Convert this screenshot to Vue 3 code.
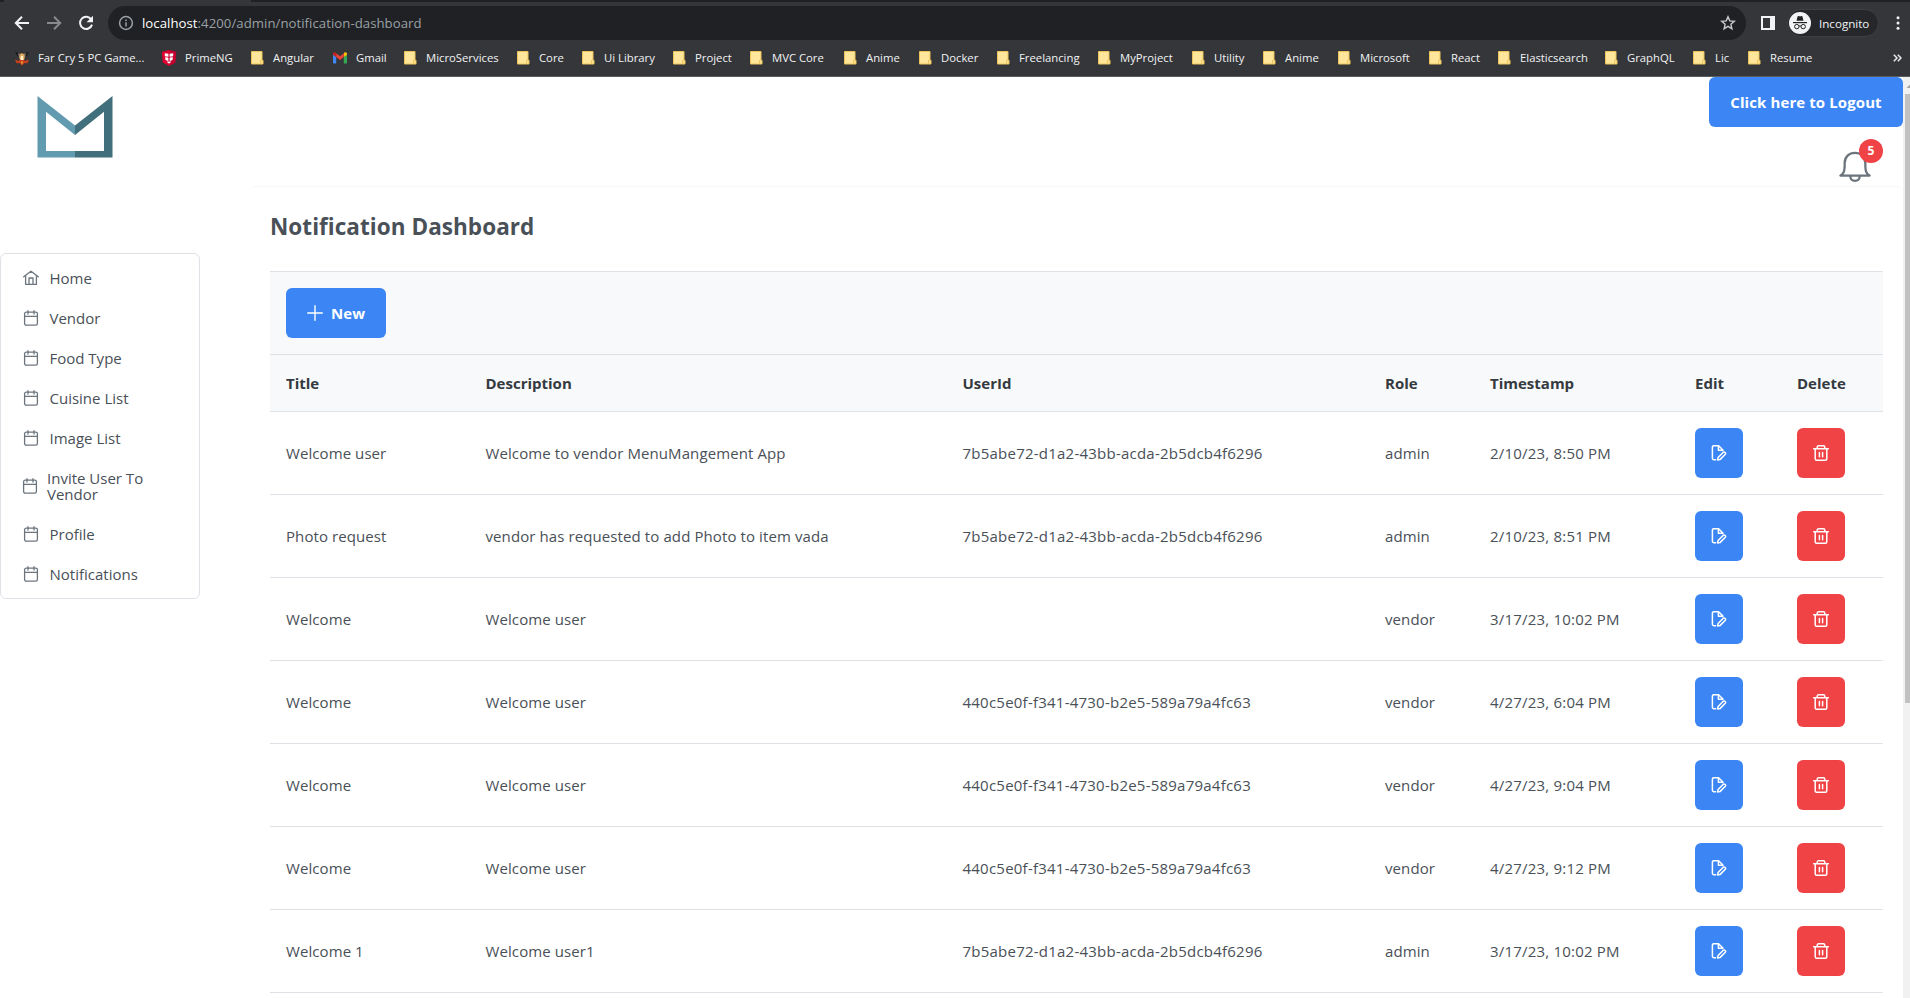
<script setup>
const bookmarks = [
  { label: 'Far Cry 5 PC Game...', icon: 'game', width: 147 },
  { label: 'PrimeNG', icon: 'prime', width: 90 },
  { label: 'Angular', width: 81 },
  { label: 'Gmail', icon: 'gmail', width: 72 },
  { label: 'MicroServices', width: 113 },
  { label: 'Core', width: 65 },
  { label: 'Ui Library', width: 91 },
  { label: 'Project', width: 77 },
  { label: 'MVC Core', width: 94 },
  { label: 'Anime', width: 75 },
  { label: 'Docker', width: 78 },
  { label: 'Freelancing', width: 101 },
  { label: 'MyProject', width: 94 },
  { label: 'Utility', width: 71 },
  { label: 'Anime', width: 75 },
  { label: 'Microsoft', width: 91 },
  { label: 'React', width: 69 },
  { label: 'Elasticsearch', width: 107 },
  { label: 'GraphQL', width: 88 },
  { label: 'Lic', width: 55 },
  { label: 'Resume', width: 80 },
]

const menu = [
  { label: 'Home', icon: 'home' },
  { label: 'Vendor' },
  { label: 'Food Type' },
  { label: 'Cuisine List' },
  { label: 'Image List' },
  { label: 'Invite User To Vendor', wrap: true },
  { label: 'Profile' },
  { label: 'Notifications' },
]

const columns = ['Title', 'Description', 'UserId', 'Role', 'Timestamp', 'Edit', 'Delete']

const idA = '7b5abe72-d1a2-43bb-acda-2b5dcb4f6296'
const idB = '440c5e0f-f341-4730-b2e5-589a79a4fc63'
const rows = [
  ['Welcome user', 'Welcome to vendor MenuMangement App', idA, 'admin', '2/10/23, 8:50 PM'],
  ['Photo request', 'vendor has requested to add Photo to item vada', idA, 'admin', '2/10/23, 8:51 PM'],
  ['Welcome', 'Welcome user', '', 'vendor', '3/17/23, 10:02 PM'],
  ['Welcome', 'Welcome user', idB, 'vendor', '4/27/23, 6:04 PM'],
  ['Welcome', 'Welcome user', idB, 'vendor', '4/27/23, 9:04 PM'],
  ['Welcome', 'Welcome user', idB, 'vendor', '4/27/23, 9:12 PM'],
  ['Welcome 1', 'Welcome user1', idA, 'admin', '3/17/23, 10:02 PM'],
]
</script>

<template>
  <div class="window">
    <header class="chrome">
      <div class="tabstrip"><span class="tab-left"></span><span class="tab-active"></span><span class="tab-rest"></span></div>
      <div class="toolbar">
        <div class="nav">
          <svg width="16" height="16" viewBox="0 0 16 16" fill="none" stroke="#f1f3f4" stroke-width="2"><path d="M15 8H2.5M8 1.8 1.800 8 8 14.200" /></svg>
          <svg width="16" height="16" viewBox="0 0 16 16" fill="none" stroke="#87898c" stroke-width="2"><path d="M1 8h12.500M8 1.800 14.200 8 8 14.200" /></svg>
          <svg width="16" height="16" viewBox="0 0 16 16" fill="none" stroke="#f1f3f4" stroke-width="2"><path d="M13.300 4.600A6.100 6.100 0 1 0 14 9.600" /><path d="M15 .8v6.400H8.600z" fill="#f1f3f4" stroke="none" /></svg>
        </div>
        <div class="omnibox">
          <svg width="16" height="16" viewBox="0 0 16 16" fill="none" stroke="#9aa0a6" stroke-width="1.500"><circle cx="8" cy="8" r="6.400" /><path d="M8 7.200v4.200M8 4.400v1.600" /></svg>
          <span class="url"><b>localhost</b><i>:4200/admin/notification-dashboard</i></span>
          <svg width="16" height="16" viewBox="0 0 16 16" fill="none" stroke="#c8cacd" stroke-width="1.400"><path d="m8 1.800 1.800 4.100 4.500.4-3.400 3 1 4.400L8 11.400l-3.900 2.300 1-4.400-3.400-3 4.500-.4z" /></svg>
        </div>
        <svg class="panel" width="14" height="14" viewBox="0 0 14 14"><path d="M0 0h14v14H0zM2 2v10h7V2z" fill="#f1f3f4" fill-rule="evenodd" /></svg>
        <div class="incognito">
          <svg width="22" height="22" viewBox="0 0 22 22"><circle cx="11" cy="11" r="11" fill="#f1f3f4" /><path d="M7.500 8.700 8.600 4.600c.2-.6.700-.7 1.100-.5 1 .4 1.800.4 2.700 0 .4-.2.9-.1 1 .5l1.100 4.100z" fill="#202124" /><path d="M4 10.600h14" stroke="#202124" stroke-width="1.200" /><g fill="none" stroke="#202124"><circle cx="7.800" cy="14.600" r="2.200" /><circle cx="14.200" cy="14.600" r="2.200" /><path d="M10 14.200q1-.7 2 0" /></g></svg>
          <span>Incognito</span>
        </div>
        <svg class="dots" width="4" height="16" viewBox="0 0 4 16" fill="#f1f3f4"><circle cx="2" cy="2.800" r="1.500" /><circle cx="2" cy="8" r="1.500" /><circle cx="2" cy="13.200" r="1.500" /></svg>
      </div>
      <nav class="bookmarks">
        <a v-for="(b, i) in bookmarks" :key="i" class="bookmark" :style="{ width: b.width + 'px' }">
          <svg v-if="b.icon === 'game'" class="fav" width="16" height="16" viewBox="0 0 16 16"><path d="M1 1.500l4 2 3-1 3 1 4-2-2.500 5h-9z" fill="#17181a" /><path d="M4 3.500h8l-1 4H5z" fill="#8d7a68" /><path d="M8 3c2 1 3 3 2.500 5.500l-1 3h-3l-1-3C5 6 6 4 8 3z" fill="#e0a860" /><path d="M.8 9.500 5 11l1-1.500h4l1 1.500 4.200-1.500-1.800 3.800-3-.3L8 15.500 5.600 13l-3 .3z" fill="#c9401d" /><path d="M7 6h2l.5 4h-3z" fill="#fff0c5" /><path d="M7 11.500h2l-1 3.500z" fill="#f4b23b" /></svg>
          <svg v-else-if="b.icon === 'prime'" class="fav" width="16" height="16" viewBox="0 0 16 16"><path d="M8 0l7.200 2-1 10.500L8 16l-6.200-3.500L.8 2z" fill="#dd0031" /><path d="M8 0l7.200 2-1 10.500L8 16z" fill="#c3002f" /><path d="M3.800 3.300l3.600.4v3L3.800 6.200zM12.200 3.300l-3.600.4v3l3.600-.5zM4.300 7l3.100.8v3H5.900L4.300 9.800zM11.700 7l-3.100.8v3h1.500l1.600-1zM6 11.500h4L9 13.200H7z" fill="#fff" /></svg>
          <svg v-else-if="b.icon === 'gmail'" class="fav" width="16" height="16" viewBox="0 0 16 16"><path d="M1 4v8.500c0 .6.400 1 1 1h2.200V7z" fill="#4285f4" /><path d="M15 4v8.500c0 .6-.4 1-1 1h-2.200V7z" fill="#34a853" /><path d="M11.800 3.300V7L15 4.700V3.800c0-1.500-1.600-2.100-2.500-1.200z" fill="#fbbc04" /><path d="M4.200 7V3.300L8 6.200l3.800-2.900V7L8 9.900z" fill="#ea4335" /><path d="M1 3.800v.9L4.200 7V3.300l-.7-.7C2.600 1.700 1 2.300 1 3.800z" fill="#c5221f" /></svg>
          <svg v-else class="folder" width="13" height="15" viewBox="0 0 13 15"><path d="M.5 1.500h10.500v8.700h1v3.800H.5z" fill="#ffe69a" stroke="#ebc35a" /><path d="M9.500 13.500v-3l1.500-.5" fill="none" stroke="#ebc35a" /></svg>
          <span>{{ b.label }}</span>
        </a>
        <span class="more">
          <svg width="9" height="8" viewBox="0 0 9 8" fill="none" stroke="#e8eaed" stroke-width="1.500"><path d="M.8.800 4 4 .8 7.200M4.800.800 8 4 4.800 7.200" /></svg>
        </span>
      </nav>
    </header>

    <div class="page">
      <aside class="side">
        <svg class="logo" width="76" height="62" viewBox="0 0 76 62">
          <path d="M.5 0 38 29.500V39L9 15.700V55H38v6.500H.5z" fill="#629bb0" />
          <path d="M75.500 0 38 29.500V39l29-23.300V55H38v6.500h37.500z" fill="#416f7c" />
        </svg>
        <ul class="menu">
          <li v-for="m in menu" :key="m.label" :class="{ wrap: m.wrap }">
            <svg v-if="m.icon === 'home'" width="16" height="16" viewBox="0 0 16 16" fill="none" stroke="#6c757d" stroke-width="1.300" stroke-linecap="round" stroke-linejoin="round"><path d="M.7 6.800 8 1.200l7.300 5.600M2.600 5.600v8.800h10.800V5.600M6 14.200V8h4v6.200" /></svg>
            <svg v-else width="16" height="16" viewBox="0 0 16 16" fill="none" stroke="#6c757d" stroke-width="1.300" stroke-linecap="round" stroke-linejoin="round"><rect x="1.600" y="2.200" width="12.800" height="13" rx="1.600" /><path d="M1.600 6.400h12.800M5 .7v3.400M11 .7v3.400" /></svg>
            <span>{{ m.label }}</span>
          </li>
        </ul>
      </aside>

      <main class="main">
        <div class="topbar">
          <button class="btn logout">Click here to Logout</button>
          <div class="bell">
            <svg width="32" height="32" viewBox="0 0 32 32" fill="none" stroke="#6c757d" stroke-width="2.300" stroke-linecap="round" stroke-linejoin="round"><path d="M1.400 24.600C5 23 5.700 20 5.700 12 5.700 5.700 10 1.900 16 1.900S26.300 5.700 26.300 12c0 8 .7 11 4.300 12.600zM11.300 25.500c.3 2.900 2 4.300 4.700 4.300s4.400-1.400 4.700-4.300" /></svg>
            <span class="badge">5</span>
          </div>
        </div>

        <section class="card">
          <h1>Notification Dashboard</h1>
          <div class="table-head">
            <button class="btn new">
              <svg width="16" height="16" viewBox="0 0 16 16" stroke="#fff" stroke-width="1.400" stroke-linecap="round"><path d="M8 .7v14.600M.7 8h14.600" /></svg>
              <span>New</span>
            </button>
          </div>
          <div class="row head">
            <span v-for="c in columns" :key="c">{{ c }}</span>
          </div>
          <div v-for="(r, i) in rows" :key="i" class="row">
            <span v-for="(cell, j) in r" :key="j" :class="'c' + j">{{ cell }}</span>
            <span>
              <button class="btn icon">
                <svg width="16" height="16" viewBox="0 0 16 16" fill="none" stroke="#fff" stroke-width="1.500" stroke-linejoin="round" stroke-linecap="round"><path d="M4.600 14.700H3c-1 0-1.600-.6-1.600-1.600V2.300C1.400 1.300 2 .7 3 .7h4.600l4.300 4.300v.7M7.400.9v4.300h4.200" /><path d="M6.600 15l.5-2.500 5.200-5.200c1.200-1.100 3.200.8 2 2l-5.300 5.300z" /></svg>
              </button>
            </span>
            <span>
              <button class="btn icon danger">
                <svg class="trash" width="16" height="16" viewBox="0 0 16 16" fill="none" stroke="#fff" stroke-width="1.500" stroke-linejoin="round" stroke-linecap="round"><path d="M.7 3.700h14.600M2.200 3.700v10c0 1 .5 1.500 1.400 1.500h8.800c.9 0 1.400-.5 1.400-1.500v-10M4.200 3.500V2.200c0-.9.500-1.400 1.300-1.400h5c.8 0 1.300.5 1.300 1.400v1.300M6.400 7.600v4.200M9.600 7.600v4.200" /></svg>
              </button>
            </span>
          </div>
        </section>
      </main>

      <div class="scrollbar">
        <svg width="7" height="17" viewBox="0 0 7 17"><path d="M3.500 11 7 7.500l3.500 3.500z" fill="#a3a3a3" /></svg>
        <div class="thumb"></div>
      </div>
    </div>
  </div>
</template>

<style>
body {
  margin: 0;
  overflow: hidden;
}
</style>

<style scoped>
* {
  box-sizing: border-box;
}
.window {
  width: 1910px;
  height: 998px;
  overflow: hidden;
  display: flex;
  flex-direction: column;
  background: #fff;
  font-family: 'Open Sans', 'Noto Sans', sans-serif;
  font-size: 15px;
  color: #495057;
}
svg {
  display: block;
  flex: none;
}
.chrome {
  height: 77px;
  flex: none;
  background: #35363a;
  border-bottom: 1px solid #5b5c60;
  color: #f1f3f4;
}
.tabstrip {
  display: flex;
  height: 2px;
}
.tab-left {
  width: 4px;
  background: #202124;
}
.tab-active {
  width: 247px;
}
.tab-rest {
  flex: 1;
  background: #202124;
}
.toolbar {
  display: flex;
  align-items: center;
  height: 42px;
  padding-left: 14px;
}
.nav {
  display: flex;
  gap: 16px;
  width: 94px;
}
.omnibox {
  display: flex;
  align-items: center;
  width: 1638px;
  height: 34px;
  border-radius: 17px;
  background: #202124;
  padding: 0 10px;
}
.url {
  flex: 1;
  margin-left: 8px;
  font-size: 13.2px;
  line-height: 18px;
  letter-spacing: 0.04px;
}
.url b {
  font-weight: 400;
  color: #fff;
}
.url i {
  font-style: normal;
  color: #9aa0a6;
}
.panel {
  margin-left: 15px;
}
.incognito {
  display: flex;
  align-items: center;
  width: 92px;
  height: 28px;
  margin-left: 12px;
  padding-left: 1px;
  border: 1px solid #3f4044;
  border-radius: 14px;
  background: #26272b;
  font-size: 11.6px;
}
.incognito span {
  margin-left: 8px;
}
.dots {
  margin-left: 17px;
}
.bookmarks {
  display: flex;
  align-items: center;
  height: 27px;
  padding-left: 14px;
  font-size: 11.3px;
}
.bookmark {
  display: flex;
  align-items: center;
  flex: none;
  white-space: nowrap;
}
.folder {
  margin-right: 9px;
}
.fav {
  margin-right: 8px;
}
.more {
  margin-left: 65px;
}
.page {
  flex: 1;
  min-height: 0;
  display: flex;
}
.side {
  width: 249px;
  flex: none;
  padding-top: 19px;
}
.logo {
  margin-left: 37px;
}
.menu {
  width: 200px;
  margin: 95px 0 0;
  padding: 4px 0;
  border: 1px solid #dee2e6;
  border-radius: 6px;
  list-style: none;
  line-height: 16px;
}
.menu li {
  display: flex;
  align-items: center;
  height: 40px;
  padding: 0 40px 0 22px;
}
.menu li span {
  margin-left: 10.5px;
}
.menu li.wrap {
  height: 56px;
  padding-left: 21px;
}
.menu li.wrap span {
  margin-left: 9px;
}
.main {
  flex: 1;
  min-width: 0;
}
.topbar {
  display: flex;
  flex-direction: column;
  align-items: flex-end;
  height: 109px;
}
.btn {
  display: flex;
  align-items: center;
  justify-content: center;
  height: 50px;
  padding: 0;
  border: 0;
  border-radius: 6px;
  background: #3b86f4;
  color: #fff;
  font: 700 15px 'Open Sans', 'Noto Sans', sans-serif;
  letter-spacing: 0.1px;
}
.logout {
  width: 194px;
}
.bell {
  position: relative;
  width: 32px;
  height: 32px;
  margin: 24px 32px 0 0;
}
.badge {
  position: absolute;
  left: 20px;
  top: -12px;
  width: 24px;
  height: 24px;
  border-radius: 12px;
  background: #ef4346;
  color: #fff;
  font-size: 12px;
  font-weight: 700;
  line-height: 24px;
  text-align: center;
}
.card {
  padding: 23px 20px 0 21px;
  border-top: 1px solid #f8f8f8;
  border-radius: 6px;
}
h1 {
  margin: 0;
  height: 61px;
  font-size: 22.5px;
  line-height: 34px;
  font-weight: 700;
  letter-spacing: 0.05px;
}
.table-head {
  height: 84px;
  padding: 16px;
  border-top: 1px solid #dee2e6;
  border-bottom: 1px solid #dee2e6;
  background: #f8f9fa;
}
.new {
  width: 100px;
  gap: 8px;
}
.row {
  display: grid;
  grid-template-columns: 199.5px 477px 422.5px 105px 205px 102px 102px;
  align-items: center;
  height: 83px;
  border-bottom: 1px solid #dee2e6;
  white-space: nowrap;
}
.row > span {
  padding-left: 16px;
}
.row > .c0 {
  letter-spacing: 0.08px;
}
.row > .c1 {
  letter-spacing: 0.1px;
}
.row > .c2 {
  letter-spacing: 0.23px;
}
.row > .c3 {
  letter-spacing: 0.1px;
}
.row > .c4 {
  letter-spacing: 0.2px;
}
.head {
  height: 57px;
  background: #f8f9fa;
  color: #343a40;
  font-weight: 700;
}
.icon {
  width: 48px;
}
.danger {
  background: #ef4346;
}
.trash {
  margin-right: 1px;
}
.scrollbar {
  width: 7px;
  flex: none;
  background: #f1f1f1;
}
.thumb {
  width: 5px;
  height: 609px;
  margin-left: 2px;
  background: #c1c1c1;
}
</style>
